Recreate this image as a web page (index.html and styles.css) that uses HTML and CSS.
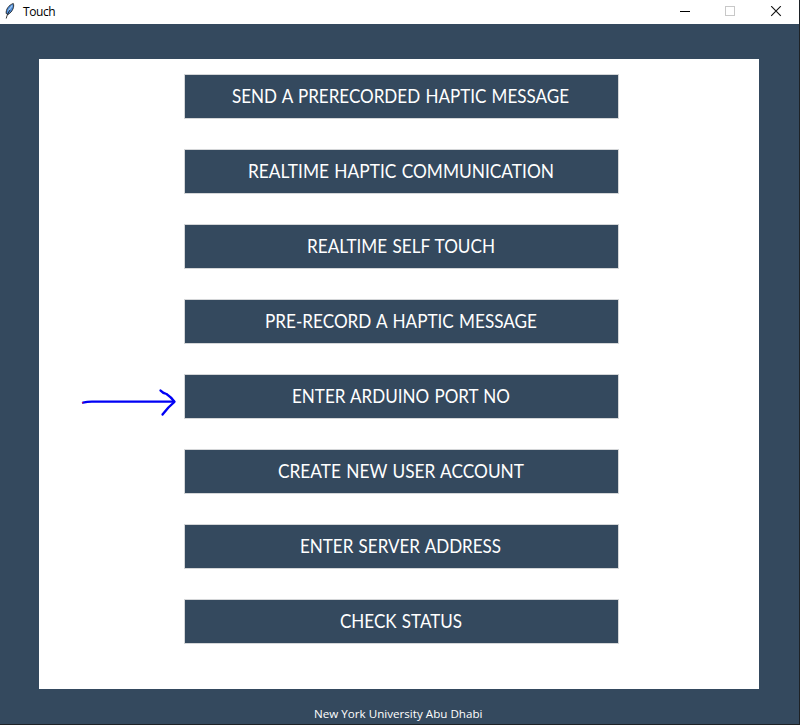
FILE: index.html
```html
<!DOCTYPE html>
<html lang="en">
<head>
<meta charset="utf-8">
<title>Touch</title>
<link rel="stylesheet" href="styles.css">
</head>
<body>
<div class="window">
  <header class="titlebar">
    <svg class="feather" width="12" height="18" viewBox="0 0 12 18">
      <path d="M2.2 11.5C1.8 7.5 4.5 3.2 9.3 1.5C10.6 4.5 8.5 10 4 12.5Z" fill="#4f8fdc" stroke="#222" stroke-width=".9"/>
      <path d="M8.3 3.5L4.5 8.5" stroke="#a9cbee" stroke-width="1.2"/>
      <path d="M6 8C4.4 10.5 3 13 2.2 16.5" fill="none" stroke="#222" stroke-width=".9"/>
    </svg>
    <span class="title">Touch</span>
    <svg class="controls" width="102" height="12" viewBox="0 0 102 12" fill="none">
      <path d="M0 5.5H10" stroke="#000"/>
      <rect x="45.5" y=".5" width="9" height="9" stroke="#c8c8c8"/>
      <path d="M91.2 .2L100.8 9.8M100.8 .2L91.2 9.8" stroke="#111" stroke-width="1.15"/>
    </svg>
  </header>
  <main class="panel">
    <nav class="menu">
      <button><svg width="337" height="24"><text y="18" textLength="337" lengthAdjust="spacingAndGlyphs">SEND A PRERECORDED HAPTIC MESSAGE</text></svg></button>
      <button><svg width="306" height="24"><text y="18" textLength="306" lengthAdjust="spacingAndGlyphs">REALTIME HAPTIC COMMUNICATION</text></svg></button>
      <button><svg width="188" height="24"><text y="18" textLength="188" lengthAdjust="spacingAndGlyphs">REALTIME SELF TOUCH</text></svg></button>
      <button><svg width="272" height="24"><text y="18" textLength="272" lengthAdjust="spacingAndGlyphs">PRE-RECORD A HAPTIC MESSAGE</text></svg></button>
      <button><svg width="218" height="24"><text y="18" textLength="218" lengthAdjust="spacingAndGlyphs">ENTER ARDUINO PORT NO</text></svg></button>
      <button><svg width="246" height="24"><text y="18" textLength="246" lengthAdjust="spacingAndGlyphs">CREATE NEW USER ACCOUNT</text></svg></button>
      <button><svg width="202" height="24"><text y="18" textLength="201" lengthAdjust="spacingAndGlyphs">ENTER SERVER ADDRESS</text></svg></button>
      <button><svg width="122" height="24"><text y="18" textLength="122" lengthAdjust="spacingAndGlyphs">CHECK STATUS</text></svg></button>
    </nav>
    <svg class="arrow" width="100" height="30" viewBox="0 0 100 30" fill="none" stroke="#0000f5" stroke-width="2.3" stroke-linecap="round" stroke-linejoin="round">
      <path d="M3 14.7Q7 13.7 12 13.7H94"/>
      <path d="M80.5 2.5Q82.5 5 86.5 6Q91 9 94.5 13.8Q88 19 82.5 26.5"/>
      <circle cx="2.6" cy="14.8" r=".7" fill="#e01050" stroke="none"/>
    </svg>
  </main>
  <footer class="footer"><svg width="170" height="18"><text y="13" textLength="168.5" lengthAdjust="spacingAndGlyphs">New York University Abu Dhabi</text></svg></footer>
</div>
</body>
</html>
```
FILE: styles.css
```css
* { box-sizing: border-box; }
body { margin: 0; background: #1e2226; }
.window {
  width: 799px;
  height: 724px;
  background: #34495e;
  overflow: hidden;
}
.titlebar {
  display: flex;
  height: 24px;
  padding-left: 4px;
  background: #fff;
  font: 12px/23px "Open Sans", "Noto Sans", sans-serif;
  letter-spacing: -0.4px;
  color: #000;
}
.feather { margin-top: 2px; }
.title { margin-left: 7px; }
.controls { margin: 6px 17px 0 auto; }
.panel {
  position: relative;
  width: 720px;
  height: 630px;
  margin: 35px 0 0 39px;
  padding: 15px 0 0 145px;
  background: #fff;
}
.menu {
  display: flex;
  flex-direction: column;
  gap: 30px;
  width: 435px;
}
.menu button {
  display: flex;
  justify-content: center;
  align-items: center;
  height: 45px;
  padding: 0 2px 0 0;
  border: 1px solid #d4d6d8;
  background: #34495e;
}
.menu svg, .footer svg { display: block; overflow: visible; }
.menu text {
  font: 18.6px Lato, sans-serif;
  word-spacing: 1px;
  fill: #fff;
}
.arrow { position: absolute; left: 41px; top: 329px; }
.footer { margin: 16px 0 0 314px; }
.footer text {
  font: 11.5px "Open Sans", "Noto Sans", sans-serif;
  fill: #fff;
}
```
